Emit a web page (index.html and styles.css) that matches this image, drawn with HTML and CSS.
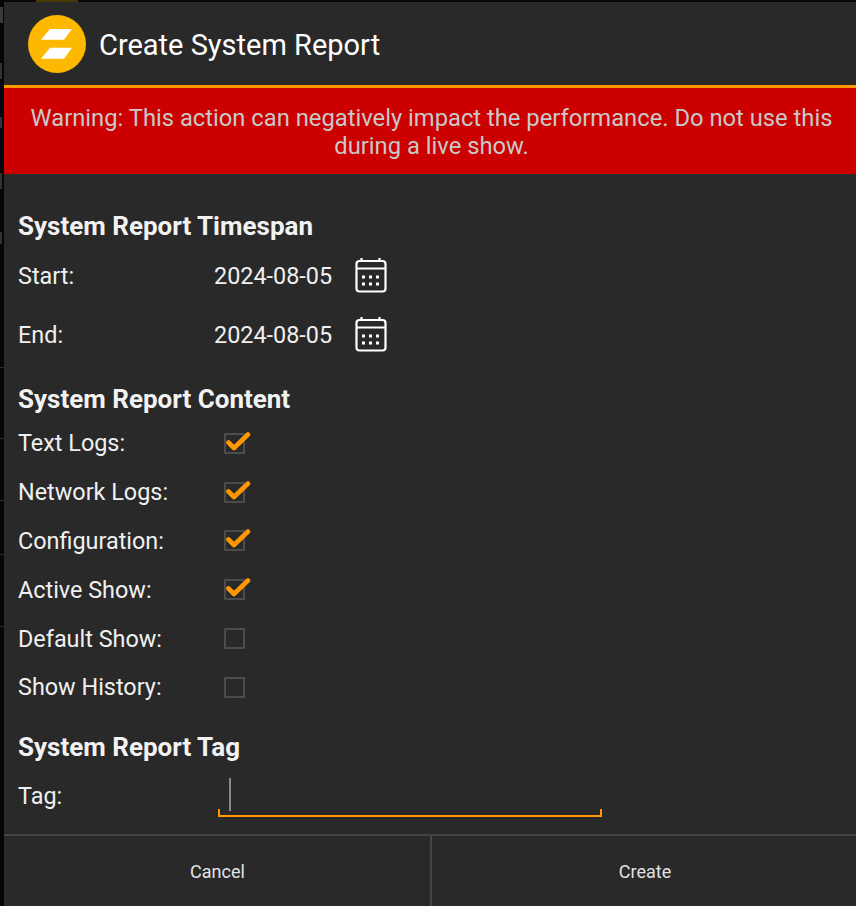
FILE: index.html
```html
<!DOCTYPE html>
<html lang="en">
<head>
<meta charset="utf-8">
<title>Create System Report</title>
<link rel="stylesheet" href="styles.css">
</head>
<body>
<div class="backdrop-tab"></div>
<div class="backdrop-strip"></div>
<main class="dialog">
  <header class="title-bar">
    <svg class="logo" width="58" height="58" viewBox="0 0 58 58">
      <circle cx="29" cy="29" r="29" fill="#fdb900"/>
      <path d="M22 14h22l-8 10.700h-23z M22 32.700h22l-8 11h-23z" fill="#fff"/>
    </svg>
    <h1 class="title">Create System Report</h1>
  </header>
  <p class="warning">Warning: This action can negatively impact the performance. Do not use this during a live show.</p>
  <div class="content">
    <h2 class="heading heading-first">System Report Timespan</h2>
    <div class="row date-row">
      <span class="label">Start:</span>
      <span class="date">2024-08-05</span>
      <svg class="cal" width="32" height="36" viewBox="0 0 32 36"><use href="#cal-icon"/></svg>
    </div>
    <div class="row date-row">
      <span class="label">End:</span>
      <span class="date">2024-08-05</span>
      <svg class="cal" width="32" height="36" viewBox="0 0 32 36"><use href="#cal-icon"/></svg>
    </div>
    <h2 class="heading heading-content">System Report Content</h2>
    <div class="row check-row"><span class="label">Text Logs:</span><span class="box"><svg class="tick" width="26" height="22" viewBox="0 0 26 22"><use href="#tick-icon"/></svg></span></div>
    <div class="row check-row"><span class="label">Network Logs:</span><span class="box"><svg class="tick" width="26" height="22" viewBox="0 0 26 22"><use href="#tick-icon"/></svg></span></div>
    <div class="row check-row"><span class="label">Configuration:</span><span class="box"><svg class="tick" width="26" height="22" viewBox="0 0 26 22"><use href="#tick-icon"/></svg></span></div>
    <div class="row check-row"><span class="label">Active Show:</span><span class="box"><svg class="tick" width="26" height="22" viewBox="0 0 26 22"><use href="#tick-icon"/></svg></span></div>
    <div class="row check-row"><span class="label">Default Show:</span><span class="box"></span></div>
    <div class="row check-row"><span class="label">Show History:</span><span class="box"></span></div>
    <h2 class="heading heading-tag">System Report Tag</h2>
    <div class="row tag-row">
      <span class="label">Tag:</span>
      <span class="field"><span class="caret"></span></span>
    </div>
  </div>
  <footer class="actions">
    <span class="action action-left">Cancel</span>
    <span class="action">Create</span>
  </footer>
</main>
<svg class="defs" width="0" height="0">
  <defs>
    <g id="cal-icon" fill="none" stroke="#fff" stroke-width="2.200">
      <rect x="1.500" y="3" width="29" height="30.500" rx="3"/>
      <path d="M1.500 10.500h29M6.500 0v4M24.500 0v4"/>
      <path d="M7 19h3M14 19h3M21 19h3M7 26h3M14 26h3M21 26h3" stroke-width="3"/>
    </g>
    <path id="tick-icon" d="M3.500 10.500l5.500 5.500L23 2.500" fill="none" stroke="#ff9800" stroke-width="4.600" stroke-linejoin="round" stroke-linecap="round"/>
  </defs>
</svg>
</body>
</html>
```
FILE: styles.css
```css
* { box-sizing: border-box; }
html, body { margin: 0; height: 100%; }
body {
  width: 856px;
  height: 906px;
  overflow: hidden;
  background: #060606;
  font-family: Roboto, "Liberation Sans", sans-serif;
  padding: 2px 0 0 4px;
  position: relative;
}
.backdrop-tab {
  position: absolute;
  left: 36px;
  top: 0;
  width: 42px;
  height: 2px;
  background: #4a3a08;
}
.backdrop-strip {
  position: absolute;
  left: 0;
  top: 0;
  width: 4px;
  height: 906px;
  background-repeat: no-repeat;
  background-image:
    linear-gradient(#3a3a3a, #3a3a3a),
    linear-gradient(#333, #333),
    linear-gradient(#333, #333),
    linear-gradient(#333, #333),
    linear-gradient(#333, #333),
    linear-gradient(#3a2a08, #3a2a08),
    linear-gradient(#3a2a08, #3a2a08),
    linear-gradient(#3a2a08, #3a2a08),
    linear-gradient(#3a2a08, #3a2a08),
    linear-gradient(#3a2a08, #3a2a08);
  background-size:
    3px 16px,
    2px 16px,
    2px 11px,
    2px 16px,
    2px 12px,
    4px 1px,
    4px 1px,
    4px 1px,
    4px 1px,
    4px 1px;
  background-position:
    0 7px,
    0 63px,
    0 117px,
    0 173px,
    0 232px,
    0 367px,
    0 438px,
    0 500px,
    0 554px,
    0 626px;
}
.dialog {
  position: relative;
  height: 904px;
  background: #292929;
  display: flex;
  flex-direction: column;
}
.title-bar {
  height: 83px;
  display: flex;
  align-items: center;
  padding-left: 24px;
  gap: 13px;
  flex: none;
}
.logo { flex: none; }
.title {
  margin: 3px 0 0;
  font-size: 29px;
  font-weight: 400;
  color: #fff;
  line-height: 32px;
}
.warning {
  margin: 0;
  flex: none;
  height: 89px;
  border-top: 3px solid #ff9800;
  background: #cc0000;
  color: #c8c8c8;
  font-size: 23.750px;
  line-height: 28px;
  text-align: center;
  padding: 16px 14px 0 17px;
}
.content {
  flex: 1;
  padding: 0 14px;
  color: #f0f0f0;
}
.heading {
  margin: 0 0 5px;
  font-size: 26px;
  line-height: 30px;
  font-weight: 700;
  color: #f2f2f2;
}
.heading-first { margin-top: 37px; }
.heading-content { margin-top: 20px; }
.heading-tag { margin: 20px 0 9px; }
.row {
  display: flex;
  align-items: center;
  font-size: 23.400px;
}
.label { width: 196px; flex: none; }
.date-row { height: 59px; }
.date { width: 141px; flex: none; }
.cal { flex: none; }
.check-row { height: 48.800px; }
.box {
  width: 21px;
  height: 21px;
  margin-left: 10px;
  border: 2px solid #4c4c4c;
  border-radius: 1px;
  position: relative;
}
.tick { position: absolute; left: -1px; top: -3px; }
.tag-row { height: 49px; }
.tag-row .label { padding-top: 2px; }
.field {
  position: relative;
  display: block;
  width: 384px;
  height: 39px;
  margin: 4px 0 0 4px;
  border-bottom: 2px solid #ff9800;
}
.field::before, .field::after {
  content: "";
  position: absolute;
  bottom: 0;
  width: 2px;
  height: 6px;
  background: #ff9800;
}
.field::before { left: 0; }
.field::after { right: 0; }
.caret {
  position: absolute;
  left: 11px;
  top: 0;
  width: 2px;
  height: 33px;
  background: #8a8a8a;
}
.actions {
  flex: none;
  height: 72px;
  display: flex;
  border-top: 2px solid #454545;
}
.action {
  flex: 1;
  display: flex;
  align-items: center;
  justify-content: center;
  font-size: 18px;
  color: #e2e2e2;
}
.action-left {
  flex: none;
  width: 428px;
  border-right: 2px solid #454545;
  padding-left: 1px;
}
.action-left + .action { padding-left: 2px; }
.defs { position: absolute; }
```
